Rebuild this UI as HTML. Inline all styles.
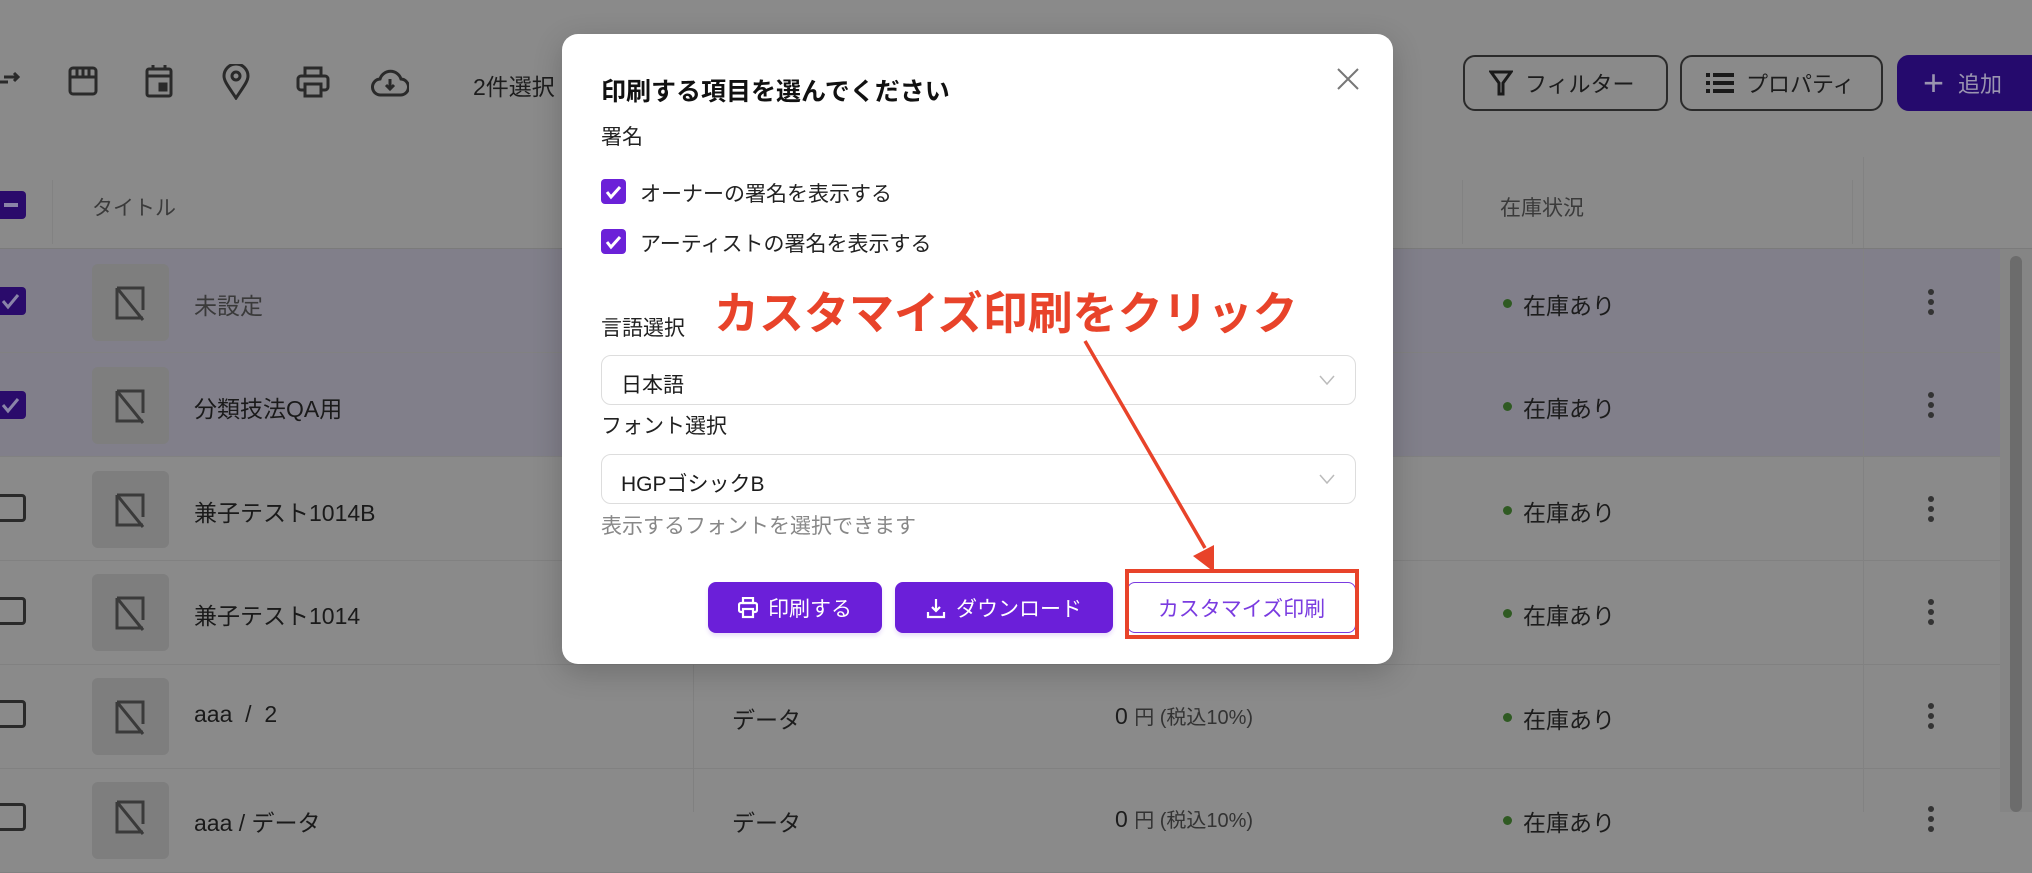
<!DOCTYPE html>
<html><head><meta charset="utf-8"><style>
*{margin:0;padding:0;box-sizing:border-box}
body{width:2032px;height:812px;overflow:hidden;background:#8a8a8a;font-family:"Liberation Sans","Noto Sans CJK JP",sans-serif;position:relative;color:#1c1c1c}
.a{position:absolute}
.row{position:absolute;left:0;width:2000px;height:104px;border-bottom:1px solid #818181}
.sel{background:#817f8a}
.thumb{position:absolute;left:92px;width:77px;height:77px;background:#7e7e7e;border-radius:6px}
.rt{position:absolute;left:194px;font-size:23px;color:#1a1a1a}
.cb{position:absolute;left:-4px;width:30px;height:28px;border-radius:4px}
.ck{background:#2a0b6b}
.un{border:3px solid #2a2a2a;background:transparent}
.stock{position:absolute;left:1503px;font-size:23px}
.stock:before{content:"";position:absolute;left:0;top:12px;width:9px;height:9px;border-radius:50%;background:#2f5a22}
.keb{position:absolute;left:1928px;width:6px}
.keb i{display:block;width:6px;height:6px;border-radius:50%;background:#333;margin-bottom:4px}
.tb{position:absolute;top:55px;height:56px;border:2px solid #2a2a2a;border-radius:12px;font-size:22px;display:flex;align-items:center;gap:12px;padding-left:24px}
.modal{position:absolute;left:562px;top:34px;width:831px;height:630px;background:#fff;border-radius:16px;box-shadow:0 8px 30px rgba(0,0,0,.2)}
.m{position:absolute;font-size:21px;color:#222}
.mcb{position:absolute;left:39px;width:25px;height:25px;border-radius:4px;background:#6b21d8}
.selbox{position:absolute;left:39px;width:755px;height:50px;border:1px solid #ddd;border-radius:10px;font-size:21px;padding:13px 19px}
.btn{position:absolute;top:548px;height:51px;border-radius:8px;background:#6b1fd9;color:#fff;font-size:21px;display:flex;align-items:center;justify-content:center;gap:10px;box-shadow:0 3px 4px rgba(107,31,217,.15)}
</style></head><body>
<svg class="a" style="left:0;top:66px" width="20" height="28" viewBox="0 0 20 28" fill="none" stroke="#2a2a2a" stroke-width="3"><path d="M0 16h8M4 11h14M14 7l4 4-4 4"/></svg>
<svg class="a" style="left:67px;top:64px" width="32" height="32" viewBox="0 0 32 32" fill="none" stroke="#2a2a2a" stroke-width="3"><rect x="3" y="4" width="26" height="26" rx="3"/><path d="M3 13h26M10 4v9M16 4v9M22 4v9"/></svg>
<svg class="a" style="left:145px;top:64px" width="28" height="34" viewBox="0 0 28 34" fill="none" stroke="#2a2a2a" stroke-width="3"><rect x="2" y="5" width="24" height="27" rx="2"/><path d="M2 12h24M8 1v5M20 1v5"/><rect x="15" y="20" width="6" height="6" fill="#2a2a2a"/></svg>
<svg class="a" style="left:222px;top:64px" width="28" height="36" viewBox="0 0 28 36" fill="none" stroke="#2a2a2a" stroke-width="3"><path d="M14 34C6 22 2 17 2 12a12 12 0 0 1 24 0c0 5-4 10-12 22z"/><circle cx="14" cy="12" r="4"/></svg>
<svg class="a" style="left:296px;top:66px" width="34" height="32" viewBox="0 0 34 32" fill="none" stroke="#2a2a2a" stroke-width="3"><rect x="9" y="2" width="16" height="8"/><rect x="2" y="10" width="30" height="14" rx="3"/><rect x="9" y="18" width="16" height="12" fill="#8a8a8a"/></svg>
<svg class="a" style="left:371px;top:67px" width="38" height="30" viewBox="0 0 38 30" fill="none" stroke="#2a2a2a" stroke-width="3"><path d="M10 28a8 8 0 0 1-1-16A11 11 0 0 1 30 12a8 8 0 0 1-1 16z"/><path d="M19 12v10M15 18l4 4 4-4"/></svg>
<div class="a" style="left:473px;top:68px;font-size:23px">2件選択</div>
<div class="tb" style="left:1463px;width:205px"><svg width="24" height="28" viewBox="0 0 24 28"><path d="M2 3h20l-8 11v11h-4V14z" fill="none" stroke="#1a1a1a" stroke-width="3"/></svg>フィルター</div>
<div class="tb" style="left:1680px;width:203px"><svg width="28" height="22" viewBox="0 0 28 22" fill="#1a1a1a"><rect x="0" y="1" width="4" height="4"/><rect x="7" y="1" width="21" height="4"/><rect x="0" y="9" width="4" height="4"/><rect x="7" y="9" width="21" height="4"/><rect x="0" y="17" width="4" height="4"/><rect x="7" y="17" width="21" height="4"/></svg>プロパティ</div>
<div class="tb" style="left:1897px;width:150px;background:#250a6d;border-color:#250a6d;color:#9a95b0;gap:14px"><span style="font-size:36px;line-height:1;color:#9a95b0">+</span>追加</div>
<div class="a" style="left:-4px;top:191px;width:30px;height:28px;background:#2a0b6b;border-radius:4px"><div style="position:absolute;left:8px;top:12px;width:14px;height:4px;background:#8a84a8"></div></div>
<div class="a" style="left:52px;top:180px;width:1px;height:64px;background:#828282"></div>
<div class="a" style="left:92px;top:192px;font-size:21px;color:#3a3a3a">タイトル</div>
<div class="a" style="left:1462px;top:180px;width:1px;height:64px;background:#828282"></div>
<div class="a" style="left:1852px;top:180px;width:1px;height:64px;background:#828282"></div>
<div class="a" style="left:1863px;top:157px;width:1px;height:92px;background:#828282"></div>
<div class="a" style="left:1500px;top:192px;font-size:21px;color:#3a3a3a">在庫状況</div>
<div class="a" style="left:0;top:248px;width:2032px;height:1px;background:#7b7b7b"></div>
<div class="row sel" style="top:249px"></div>
<div class="row sel" style="top:353px"></div>
<div class="row" style="top:457px"></div>
<div class="row" style="top:561px"></div>
<div class="row" style="top:665px"></div>
<div class="row" style="top:769px"></div>
<div class="a" style="left:693px;top:457px;width:1px;height:355px;background:#808080"></div>
<div class="a" style="left:1863px;top:249px;width:1px;height:563px;background:#828282"></div>
<div class="cb ck" style="top:287px"><svg width="30" height="28" viewBox="0 0 30 28"><path d="M7 14l5 6 10-12" fill="none" stroke="#8a84a8" stroke-width="3"/></svg></div>
<div class="cb ck" style="top:391px"><svg width="30" height="28" viewBox="0 0 30 28"><path d="M7 14l5 6 10-12" fill="none" stroke="#8a84a8" stroke-width="3"/></svg></div>
<div class="cb un" style="top:494px"></div>
<div class="cb un" style="top:597px"></div>
<div class="cb un" style="top:700px"></div>
<div class="cb un" style="top:803px"></div>
<div class="thumb" style="top:264px"></div><div class="thumb" style="top:367px"></div><div class="thumb" style="top:471px"></div><div class="thumb" style="top:574px"></div><div class="thumb" style="top:678px"></div><div class="thumb" style="top:782px"></div>
<svg class="a" style="left:114px;top:284px" width="32" height="40" viewBox="0 0 32 40" fill="none" stroke="#3a3a3a" stroke-width="3"><path d="M3 4v30h26M3 4l26 32M3 4h26v22"/></svg>
<svg class="a" style="left:114px;top:387px" width="32" height="40" viewBox="0 0 32 40" fill="none" stroke="#3a3a3a" stroke-width="3"><path d="M3 4v30h26M3 4l26 32M3 4h26v22"/></svg>
<svg class="a" style="left:114px;top:491px" width="32" height="40" viewBox="0 0 32 40" fill="none" stroke="#3a3a3a" stroke-width="3"><path d="M3 4v30h26M3 4l26 32M3 4h26v22"/></svg>
<svg class="a" style="left:114px;top:594px" width="32" height="40" viewBox="0 0 32 40" fill="none" stroke="#3a3a3a" stroke-width="3"><path d="M3 4v30h26M3 4l26 32M3 4h26v22"/></svg>
<svg class="a" style="left:114px;top:698px" width="32" height="40" viewBox="0 0 32 40" fill="none" stroke="#3a3a3a" stroke-width="3"><path d="M3 4v30h26M3 4l26 32M3 4h26v22"/></svg>
<svg class="a" style="left:114px;top:798px" width="32" height="40" viewBox="0 0 32 40" fill="none" stroke="#3a3a3a" stroke-width="3"><path d="M3 4v30h26M3 4l26 32M3 4h26v22"/></svg>
<div class="rt" style="top:287px;color:#3a3a3a">未設定</div>
<div class="rt" style="top:390px">分類技法QA用</div>
<div class="rt" style="top:494px">兼子テスト1014B</div>
<div class="rt" style="top:597px">兼子テスト1014</div>
<div class="rt" style="top:701px">aaa&nbsp; / &nbsp;2</div>
<div class="rt" style="top:804px">aaa / データ</div>
<div class="a" style="left:732px;top:701px;font-size:23px">データ</div>
<div class="a" style="left:732px;top:804px;font-size:23px">データ</div>
<div class="a" style="left:1115px;top:701px;font-size:23px">0 <span style="font-size:20px;color:#333">円 (税込10%)</span></div>
<div class="a" style="left:1115px;top:804px;font-size:23px">0 <span style="font-size:20px;color:#333">円 (税込10%)</span></div>
<div class="stock" style="top:287px"><span style="padding-left:20px">在庫あり</span></div>
<div class="stock" style="top:390px"><span style="padding-left:20px">在庫あり</span></div>
<div class="stock" style="top:494px"><span style="padding-left:20px">在庫あり</span></div>
<div class="stock" style="top:597px"><span style="padding-left:20px">在庫あり</span></div>
<div class="stock" style="top:701px"><span style="padding-left:20px">在庫あり</span></div>
<div class="stock" style="top:804px"><span style="padding-left:20px">在庫あり</span></div>
<div class="keb" style="top:289px"><i></i><i></i><i></i></div>
<div class="keb" style="top:392px"><i></i><i></i><i></i></div>
<div class="keb" style="top:496px"><i></i><i></i><i></i></div>
<div class="keb" style="top:599px"><i></i><i></i><i></i></div>
<div class="keb" style="top:703px"><i></i><i></i><i></i></div>
<div class="keb" style="top:806px"><i></i><i></i><i></i></div>
<div class="a" style="left:2000px;top:249px;width:32px;height:563px;background:#858585"></div>
<div class="a" style="left:2010px;top:256px;width:12px;height:556px;border-radius:6px;background:#6c6c6c"></div>
<div class="modal">
<div class="m" style="left:39px;top:38px;font-size:25px;font-weight:bold;color:#111">印刷する項目を選んでください</div>
<svg class="a" style="left:775px;top:34px" width="22" height="22" viewBox="0 0 22 22"><path d="M1 1l20 20M21 1L1 21" stroke="#777" stroke-width="2"/></svg>
<div class="m" style="left:39px;top:87px">署名</div>
<div class="mcb" style="top:145px"><svg width="25" height="25" viewBox="0 0 25 25"><path d="M6 13l4 5 9-10" fill="none" stroke="#fff" stroke-width="3"/></svg></div>
<div class="m" style="left:78px;top:144px">オーナーの署名を表示する</div>
<div class="mcb" style="top:195px"><svg width="25" height="25" viewBox="0 0 25 25"><path d="M6 13l4 5 9-10" fill="none" stroke="#fff" stroke-width="3"/></svg></div>
<div class="m" style="left:78px;top:194px">アーティストの署名を表示する</div>
<div class="m" style="left:39px;top:278px">言語選択</div>
<div class="selbox" style="top:321px">日本語<svg style="position:absolute;right:20px;top:19px" width="16" height="10" viewBox="0 0 16 10"><path d="M1 1l7 8 7-8" fill="none" stroke="#bbb" stroke-width="1.5"/></svg></div>
<div class="m" style="left:39px;top:376px">フォント選択</div>
<div class="selbox" style="top:420px">HGPゴシックB<svg style="position:absolute;right:20px;top:19px" width="16" height="10" viewBox="0 0 16 10"><path d="M1 1l7 8 7-8" fill="none" stroke="#bbb" stroke-width="1.5"/></svg></div>
<div class="m" style="left:39px;top:476px;color:#888">表示するフォントを選択できます</div>
<div class="btn" style="left:146px;width:174px"><svg width="20" height="22" viewBox="0 0 20 22" fill="none" stroke="#fff" stroke-width="2.2"><rect x="5" y="1" width="10" height="5"/><rect x="1" y="6" width="18" height="9" rx="2"/><rect x="5" y="12" width="10" height="8" fill="#6b1fd9"/></svg>印刷する</div>
<div class="btn" style="left:333px;width:218px"><svg width="20" height="22" viewBox="0 0 20 22" fill="none" stroke="#fff" stroke-width="2.2"><path d="M10 2v12M6 10l4 4 4-4M2 15v5h16v-5"/></svg>ダウンロード</div>
<div class="btn" style="left:565px;width:229px;background:#fff;border:1.5px solid #7a3be0;color:#7a3be0;box-shadow:none">カスタマイズ印刷</div>
</div>
<div class="a" style="left:1125px;top:569px;width:234px;height:70px;border:4px solid #e8432a"></div>
<div class="a" style="left:714px;top:277px;font-size:45px;font-weight:bold;color:#e8432a">カスタマイズ印刷をクリック</div>
<svg class="a" style="left:0;top:0" width="2032" height="812"><path d="M1085 341L1205 548" stroke="#e8432a" stroke-width="3.5"/><path d="M1193 556L1214 572 1214 545z" fill="#e8432a"/></svg>
</body></html>
